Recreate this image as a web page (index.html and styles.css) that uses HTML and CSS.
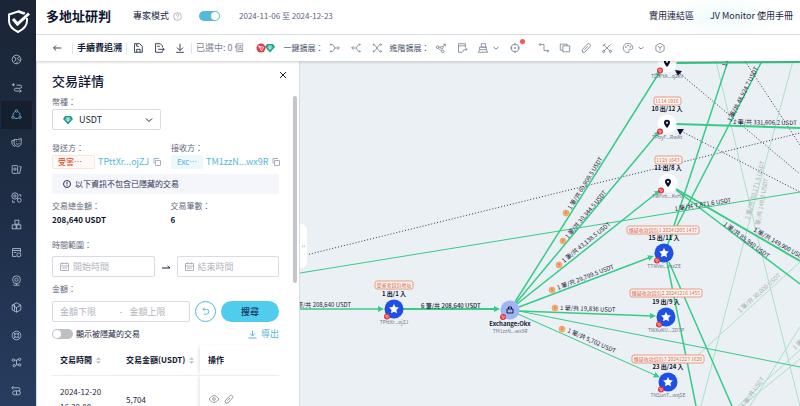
FILE: index.html
```html
<!DOCTYPE html>
<html lang="zh-Hant">
<head>
<meta charset="utf-8">
<title>多地址研判</title>
<link rel="stylesheet" href="styles.css">
</head>
<body>
<div class="app">
  <aside class="sidebar">
    <a class="logo" href="#"><svg width="24" height="24" viewBox="0 0 24 24"><path d="M12 2 19 4.500M21 9v3c0 5-4 8.500-9 11-5-2.500-9-6-9-11V5.500L12 2.500 18 4.800" /><path d="m7 10 4.500 5L23 4.500" class="logo-tick"/></svg></a>
    <nav class="nav">
      <a href="#"><svg class="ico" viewBox="0 0 14 14"><circle cx="7" cy="7" r="5.500"/><path d="M3 3.500 6 5v3l-2 1.500M11 3 8 5.500 10 8l2-.5M7 12l1-2.500"/></svg></a>
      <a href="#"><svg class="ico" viewBox="0 0 14 14"><path d="M1 3.500h4M3 1.500v4M7 4h4.500a1.500 1.500 0 0 1 0 4H6a1.500 1.500 0 0 0 0 3.500h7M11 9.500l2 2-2 2"/></svg></a>
      <a href="#" class="active"><svg class="ico" viewBox="0 0 14 14"><circle cx="7" cy="2.500" r="1.500"/><circle cx="2.500" cy="10.500" r="1.500"/><circle cx="11.500" cy="10.500" r="1.500"/><path d="M5 3.500A5 5 0 0 0 2.500 8M9 3.500A5 5 0 0 1 11.500 8M4.500 12h5"/></svg></a>
      <a href="#"><svg class="ico" viewBox="0 0 14 14"><path d="M4 3c3 1 5 0 9-1v5c0 3-2 5-4.500 5S4 10 4 7.500zM4 4 1 5c0 4 1 6 4 7M6.500 5.500h1M10 5h1M6.500 8.500c1.500 1 3 1 4-.5"/></svg></a>
      <a href="#"><svg class="ico" viewBox="0 0 14 14"><rect x="1.500" y="2" width="7" height="10" rx="1"/><circle cx="5" cy="6.500" r="1.500"/><path d="m10.500 3 2.500.6-2 8.400H9"/></svg></a>
      <a href="#"><svg class="ico" viewBox="0 0 14 14"><circle cx="5" cy="5" r="4"/><circle cx="5" cy="5" r="1.500"/><circle cx="10.500" cy="10.500" r="2.500"/><path d="M10 3.500h2.500V6M2 10.500V13h3"/></svg></a>
      <a href="#"><svg class="ico" viewBox="0 0 14 14"><rect x="5" y="1.500" width="5" height="5"/><rect x="1.500" y="7.500" width="5" height="5"/><rect x="7.500" y="7.500" width="5" height="5"/></svg></a>
      <a href="#"><svg class="ico" viewBox="0 0 14 14"><path d="M7 12H2V2h10v5M2 4.500h10M4 7h3"/><circle cx="10" cy="10" r="2.500"/></svg></a>
      <a href="#"><svg class="ico" viewBox="0 0 14 14"><circle cx="7" cy="6" r="5"/><circle cx="7" cy="6" r="2"/><path d="M7 11v2M3 13h8"/></svg></a>
      <a href="#"><svg class="ico" viewBox="0 0 14 14"><path d="m7 1 5.500 3v6L7 13 1.500 10V4zM1.500 4 7 7l5.500-3M7 7v6M4.500 3v8"/></svg></a>
      <a href="#"><svg class="ico" viewBox="0 0 14 14"><circle cx="7" cy="7" r="5.500"/><circle cx="7" cy="7" r="2.500"/><path d="m3 3 2.500 2.500M11 3 8.500 5.500M3 11l2.500-2.500M11 11 8.500 8.500"/></svg></a>
      <a href="#"><svg class="ico" viewBox="0 0 14 14"><circle cx="3" cy="4" r="1.500"/><circle cx="11" cy="3" r="1.500"/><circle cx="4" cy="11" r="1.500"/><circle cx="11" cy="10" r="1.500"/><path d="M4.500 4H7v6h2.500M7 4l3-1M5.500 11 7 10"/></svg></a>
      <a href="#"><svg class="ico" viewBox="0 0 14 14"><path d="M1.500 3.500h8a2 2 0 0 1 0 4M3 1.500l-2 2 2 2"/><rect x="2" y="7.500" width="10" height="5" rx="2.500"/><path d="M7 7.500v5"/></svg></a>
    </nav>
  </aside>

  <div class="main">
    <header class="header">
      <h1>多地址研判</h1>
      <label for="expert">專家模式</label>
      <svg class="help" viewBox="0 0 10 10"><circle cx="5" cy="5" r="4.300"/><path d="M3.700 4q0-1.400 1.300-1.400T6.300 4Q6.300 4.800 5 5.300V6M5 7v.7"/></svg>
      <input id="expert" class="switch switch-on" type="checkbox" checked>
      <span class="date">2024-11-06 至 2024-12-23</span>
      <a class="link push" href="#">實用連結區</a>
      <a class="link" href="#">JV Monitor 使用手冊</a>
    </header>

    <div class="toolbar">
      <button class="tool dark"><svg class="ico" viewBox="0 0 14 14"><path d="M12 7H3M6 4 3 7l3 3"/></svg></button>
      <span class="sep"></span>
      <strong>手續費追溯</strong>
      <span class="sep"></span>
      <div class="group dark">
        <button class="tool"><svg class="ico" viewBox="0 0 14 14"><path d="M3 2h6l3 3v7H3zM5.500 12V8.500h4V12M5.500 2v3H8"/></svg></button>
        <button class="tool"><svg class="ico" viewBox="0 0 14 14"><path d="M11 6V4.500L8.500 2H3v10h8v-1M5 5h3M6 8.500h7M11 6.500l2 2-2 2"/></svg></button>
        <button class="tool"><svg class="ico" viewBox="0 0 14 14"><path d="M7 2v7.500M3.500 6.500 7 10l3.500-3.500M2.500 12h9"/></svg></button>
      </div>
      <span class="sep"></span>
      <span class="picked">已選中: 0 個</span>
      <svg class="coins" viewBox="0 0 20 10"><circle cx="5" cy="5" r="4.500" fill="#e23a45"/><path d="m2.500 3 5 1.200-2 3.800zM2.500 3l3 2" fill="none" stroke="#fff" stroke-width=".8"/><use href="#gem" x="9" width="10" height="10"/></svg>
      <span class="caption">一鍵擴展：</span>
      <div class="group">
        <button class="tool"><svg class="ico" viewBox="0 0 14 14"><path d="M2 3h2l3 4h5M2 11h2l3-4M10 5l2 2-2 2"/><circle cx="2" cy="3" r=".6"/><circle cx="2" cy="11" r=".6"/></svg></button>
        <button class="tool"><svg class="ico" viewBox="0 0 14 14"><path d="M12 3h-2L7 7H2M12 11h-2L7 7M4 5 2 7l2 2M11 2l1 1-1 1M11 10l1 1-1 1"/></svg></button>
        <button class="tool"><svg class="ico" viewBox="0 0 14 14"><path d="M2 3h2l6 8h2M2 11h2l6-8h2M11 2l1.500 1L11 4M11 10l1.500 1-1.500 1M3 2v2M3 10v2"/></svg></button>
      </div>
      <span class="caption">進階擴展：</span>
      <div class="group">
        <button class="tool"><svg class="ico" viewBox="0 0 14 14"><circle cx="3" cy="6" r="1.500"/><circle cx="8" cy="6.500" r="1.500"/><circle cx="9" cy="11" r="1.500"/><path d="M4.500 6h2M9 5.500 12 3M9.500 2.500H12V5M4 7.500 7.500 10.500"/></svg></button>
        <button class="tool"><svg class="ico" viewBox="0 0 14 14"><path d="M3 2h8v4M3 2v10h4M3 4.500h8M8 12c0-3 1-3.500 4.500-3.500M11 6.500l2 2-2 2"/></svg></button>
        <button class="tool wide"><svg class="ico" viewBox="0 0 14 14"><path d="M5 2h5v4H5zM3 6h8v3H3zM1.500 12h11L11 9M3 9l-1.500 3"/></svg><svg class="caret" viewBox="0 0 6 6"><path d="m.5 2 2.500 2 2.500-2"/></svg></button>
        <button class="tool flagged"><svg class="ico" viewBox="0 0 14 14"><circle cx="7" cy="7" r="4.500"/><path d="M7 1v3M7 10v3M1 7h3M10 7h3M7 6v2M6 7h2"/></svg></button>
        <button class="tool"><svg class="ico" viewBox="0 0 14 14"><path d="M3 3h4v7h4"/><circle cx="2.500" cy="3" r="1"/><circle cx="11.500" cy="10.500" r="1"/></svg></button>
        <button class="tool"><svg class="ico" viewBox="0 0 14 14"><path d="M4.500 4.500h8v7h-8zM4.500 9.500h-3v-7h8v2"/></svg></button>
        <button class="tool"><svg class="ico" viewBox="0 0 14 14"><path d="m2.500 9 6-6.500a2 2 0 0 1 3 3L5.500 12H3z"/><path d="m5 9 4-4"/></svg></button>
        <button class="tool"><svg class="ico" viewBox="0 0 14 14"><path d="m3 3 8 8M11 3l-8 8M2 5l3-3"/><circle cx="11" cy="11" r="1.300"/><circle cx="3" cy="11" r="1.300"/></svg></button>
        <button class="tool wide"><svg class="ico" viewBox="0 0 14 14"><path d="M7 12.500A5.500 5.500 0 1 1 12.500 7c0 2-2.500 1.500-3.500 1.500-2 0-.5 2-1 3.500z"/><circle cx="4.500" cy="6" r=".6"/><circle cx="7" cy="4" r=".6"/><circle cx="9.800" cy="5.500" r=".6"/></svg><svg class="caret" viewBox="0 0 6 6"><path d="m.5 2 2.500 2 2.500-2"/></svg></button>
        <button class="tool"><svg class="ico" viewBox="0 0 14 14"><path d="m7 1.500 4.800 2.700v5.600L7 12.500 2.200 9.800V4.200zM4.500 5 7 6.500 9.500 5M7 6.500V10"/></svg></button>
      </div>
    </div>

    <div class="work">
      <section class="panel">
        <div class="panel-head">
          <h2>交易詳情</h2>
          <button class="close"><svg viewBox="0 0 8 8"><path d="m1 1 6 6M7 1 1 7"/></svg></button>
        </div>
        <div class="cols">
          <div>
            <label class="label" for="coin">幣種：</label>
            <div class="field coin-field">
              <svg class="gem" viewBox="0 0 10 10"><use href="#gem" width="10" height="10"/></svg>
              <select id="coin"><option>USDT</option></select>
              <svg class="chev" viewBox="0 0 8 8"><path d="m1 2.500 3 3 3-3"/></svg>
            </div>
          </div>
        </div>
        <div class="cols parties">
          <div>
            <span class="label">發送方：</span>
            <div class="party"><span class="tag tag-red">受害…</span><a href="#">TPttXr...ojZJ</a><svg class="copy" viewBox="0 0 8 8"><path d="M2.500 2.500h5v5h-5zM1 5.500v-5h5"/></svg></div>
          </div>
          <div>
            <span class="label">接收方：</span>
            <div class="party"><span class="tag tag-blue">Exc…</span><a href="#">TM1zzN...wx9R</a><svg class="copy" viewBox="0 0 8 8"><path d="M2.500 2.500h5v5h-5zM1 5.500v-5h5"/></svg></div>
          </div>
        </div>
        <p class="notice"><svg viewBox="0 0 8 8"><circle cx="4" cy="4" r="3.500"/><path d="M4 2v2.500M4 5.300v.8"/></svg>以下資訊不包含已隱藏的交易</p>
        <div class="cols totals">
          <div><span class="label">交易總金額：</span><strong>208,640 USDT</strong></div>
          <div><span class="label">交易筆數：</span><strong>6</strong></div>
        </div>
        <label class="label" for="from">時間範圍：</label>
        <div class="range">
          <div class="field"><svg class="cal" viewBox="0 0 9 9"><path d="M.5 1.500h8v7h-8zM.5 4h8M2.500.3v2M6.500.3v2M2 6h5"/></svg><input id="from" type="text" placeholder="開始時間"></div>
          <svg class="arrow" viewBox="0 0 8 4"><path d="M0 3h8L5.500 1"/></svg>
          <div class="field"><svg class="cal" viewBox="0 0 9 9"><path d="M.5 1.500h8v7h-8zM.5 4h8M2.500.3v2M6.500.3v2M2 6h5"/></svg><input type="text" placeholder="結束時間" aria-label="結束時間"></div>
        </div>
        <label class="label" for="low">金額：</label>
        <div class="amount">
          <div class="field"><input id="low" type="text" placeholder="金額下限"><span>-</span><input type="text" placeholder="金額上限" aria-label="金額上限"></div>
          <button class="reset"><svg viewBox="0 0 10 10"><path d="M2 2.500h4a2.700 2.700 0 0 1 0 5.500H3M4 .8 2 2.500l2 1.700"/></svg></button>
          <button class="search">搜尋</button>
        </div>
        <div class="options">
          <input id="hidden" class="switch" type="checkbox"><label for="hidden">顯示被隱藏的交易</label>
          <a href="#"><svg viewBox="0 0 9 9"><path d="M4.500.5v5M2 3.500l2.500 2.500L7 3.500M.5 8h8"/></svg>導出</a>
        </div>
        <table>
          <thead><tr>
            <th>交易時間<svg class="sort" viewBox="0 0 6 8"><path d="m3 0 3 3H0zM3 8 0 5h6z"/></svg></th>
            <th>交易金額(USDT)<svg class="sort" viewBox="0 0 6 8"><path d="m3 0 3 3H0zM3 8 0 5h6z"/></svg></th>
            <th class="fixed">操作</th>
          </tr></thead>
          <tbody><tr>
            <td>2024-12-20<br>16:38:00</td>
            <td>5,704</td>
            <td class="fixed"><div class="acts"><svg viewBox="0 0 12 10"><path d="M1 5q5-7 10 0-5 7-10 0z"/><circle cx="6" cy="5" r="1.300"/></svg><svg viewBox="0 0 12 10"><path d="m2 7 5-5.500q1.500-1 2.500.5t0 2L5 9H2.500zM4.500 6.500 7 4"/></svg></div></td>
          </tr></tbody>
        </table>
        <i class="thumb"></i>
      </section>

      <section class="graph">
        <svg class="canvas">
          <defs>
            <symbol id="gem" viewBox="0 0 10 10"><path d="M2 1h6l2 3-5 5.500L0 4z" fill="#1a9c8c"/><path d="M2.800 3h4.400M5 3v4M2.500 4.700q2.500 1 5 0" fill="none" stroke="#fff" stroke-width=".8"/></symbol>
            <marker id="tip" markerUnits="userSpaceOnUse" markerWidth="7" markerHeight="6" refX="3" refY="3" orient="auto"><path d="M0 0 6 3 0 6z" fill="#35cc87"/></marker>
            <g id="badge"><circle r="3" fill="#e5333f"/><path d="m-1.500-1.200 3 .7-1.300 2.200z" fill="none" stroke="#fff" stroke-width=".5"/></g>
            <g id="fee"><circle r="3" fill="#f7b27a" stroke="#ee9450" stroke-width=".6"/><path d="M-1.200-1.200h2.400M-1.200 0h2.400M0-1.200v2.800" stroke="#d66f2e" stroke-width=".5"/></g>
            <g id="star"><circle r="9.500" fill="#1e4fe6"/><path d="m0-5 1.500 3.100 3.400.4L2.400.9l.6 3.400L0 2.700l-3 1.600.6-3.400-2.500-2.400 3.400-.4z" fill="#fff"/><use href="#badge" x="-7" y="7.500"/></g>
            <g id="pin"><circle r="9.500" fill="#fff"/><path d="M0 4C-1.500 2-3 .5-3-1.300a3 3 0 0 1 6 0C3 .5 1.500 2 0 4z" fill="#0c1230"/><circle cy="-1.300" r="1" fill="#fff"/><use href="#badge" x="-7" y="7.500"/></g>
          </defs>
          <g transform="translate(-300 -61)">
            <g class="faint">
              <path d="M716 61 757 235 800 406M793 61 743 245 701 406M700 353 800 262M690 362 700 353M738 406 800 350M750 406 800 327M742 406 800 359"/>
            </g>
            <g class="dots">
              <path d="M306 255 800 133M678 72 800 174M681 131 800 192M745 61 800 145"/>
            </g>
            <g class="edge thin">
              <path d="M300 273 800 192M519 311 800 367"/>
            </g>
            <g class="edge">
              <path d="M728 61 665 253M762 61 663 253M667 262 696 406M669 262 732 406"/>
              <path d="M676 190 800 284"/>
              <path marker-end="url(#tip)" d="M515 302 659 73"/>
              <path marker-end="url(#tip)" d="M516 303 658 133"/>
              <path marker-end="url(#tip)" d="M517 304 658 192"/>
              <path marker-end="url(#tip)" d="M519 307 651 257"/>
              <path marker-end="url(#tip)" d="M519 311 653 316"/>
              <path class="thin" marker-end="url(#tip)" d="M518 314 657 376"/>
              <path marker-end="url(#tip)" d="M300 309H381"/>
            </g>
            <g class="edge wide">
              <path d="M676 63 800 62M676 124 800 128M676 189 800 261"/>
              <path marker-end="url(#tip)" d="M403 309H497"/>
            </g>
            <path d="m675 70 7 1-4 5zM677 129h7l-4 6z" fill="#0c1230"/>

            <g class="flow pale">
              <text transform="translate(749 220) rotate(-75)">2 筆/共 30,171.5 USDT</text>
              <text transform="translate(759 230) rotate(-80)">1 筆/共 149,9 USDT</text>
              <text transform="translate(740 313) rotate(-42)">1 筆/共 30,000 USDT</text>
              <text transform="translate(795 350) rotate(-42)">1 筆/共 9,000 USDT</text>
              <text transform="translate(744 408) rotate(-55)">1 筆/共 USDT</text>
            </g>
            <g class="flow">
              <text x="297" y="307">筆/共 208,640 USDT</text>
              <text x="421" y="308" class="strong">6 筆/共 208,640 USDT</text>
              <text transform="translate(571 210) rotate(-58)">1 筆/共 60,909.5 USDT</text>
              <text transform="translate(568 239) rotate(-50)">1 筆/共 30,344.5 USDT</text>
              <text transform="translate(564 263) rotate(-39)">1 筆/共 43,138.5 USDT</text>
              <text transform="translate(558 290) rotate(-21)">1 筆/共 29,799.5 USDT</text>
              <text transform="translate(560 310) rotate(2)">1 筆/共 19,836 USDT</text>
              <text transform="translate(567 332) rotate(24)">1 筆/共 5,702 USDT</text>
              <text transform="translate(733 124) rotate(1)">1 筆/共 331,606.2 USDT</text>
              <text transform="translate(731 122) rotate(-63)">1 筆/共 48,924.7 USDT</text>
              <text transform="translate(675 211) rotate(-9)">1 筆/共 7,871.6 USDT</text>
              <text transform="translate(723 225) rotate(37)">1 筆/共 85,940 USDT</text>
              <text transform="translate(753 231) rotate(30)">1 筆/共 149,900 USDT</text>
              <text transform="translate(726 67) rotate(-72)">1 筆/共 20,000 USDT</text>
            </g>
            <use href="#fee" x="566" y="213"/><use href="#fee" x="563" y="241"/><use href="#fee" x="559" y="265"/>
            <use href="#fee" x="552" y="290"/><use href="#fee" x="555" y="308"/><use href="#fee" x="562" y="329"/>

            <g class="tags">
              <rect x="375" y="281" width="38" height="8" rx="2"/><text x="394" y="287">受害者錢包地址</text>
              <rect x="654" y="97" width="27" height="8" rx="2"/><text x="667" y="103">1114 1016</text>
              <rect x="655" y="156" width="27" height="8" rx="2"/><text x="668" y="162">1129 1643</text>
              <rect x="627" y="226" width="72" height="8" rx="2"/><text x="663" y="232">嫌疑收款錢包1 20241205 1437</text>
              <rect x="630" y="289" width="72" height="8" rx="2"/><text x="666" y="295">嫌疑收款錢包2 20241216 1455</text>
              <rect x="632" y="355" width="72" height="8" rx="2"/><text x="668" y="361">嫌疑收款錢包3 20241223 1620</text>
            </g>
            <use href="#star" x="394" y="309"/>
            <use href="#star" x="664" y="253"/>
            <use href="#star" x="666" y="317"/>
            <use href="#star" x="668" y="382"/>
            <use href="#pin" x="667" y="63"/>
            <use href="#pin" x="667" y="124"/>
            <use href="#pin" x="668" y="183"/>
            <circle cx="510" cy="310" r="9.500" fill="#9fb3f6"/><path d="M507 309h6v4h-6zM508.500 309v-2h3v2" fill="none" stroke="#0c1230" stroke-width=".9"/>
            <use href="#badge" x="503" y="317"/>

            <g class="names">
              <text x="394" y="296">1 出/1 入</text><text x="667" y="111">10 出/12 入</text>
              <text x="668" y="170">11 出/8 入</text><text x="664" y="240">15 出/11 入</text>
              <text x="666" y="304">19 出/9 入</text><text x="668" y="369">23 出/24 入</text>
              <text x="510" y="326">Exchange:Okx</text>
            </g>
            <g class="hashes">
              <text x="394" y="324">TPttXr...ojZJ</text><text x="510" y="333">TM1zzN...wx9R</text>
              <text x="667" y="78">TSBFtA...q2k9</text><text x="667" y="139">TPoyF...RwAt</text>
              <text x="668" y="198">TwFvti...KvHX</text><text x="664" y="268">TTNVei...mzZE</text>
              <text x="666" y="332">TWXuKU...2D7P</text><text x="668" y="397">TNSunT...wqSE</text>
            </g>
          </g>
        </svg>
        <button class="handle">‹›</button>
      </section>
    </div>
  </div>
</div>
</body>
</html>
```
FILE: styles.css
```css
* { box-sizing: border-box; }
body, h1, h2, p { margin: 0; }
body {
  font: 8px/12px "Noto Sans CJK TC", "Noto Sans", sans-serif;
  color: #1b2540;
}
button, input, select { font: inherit; color: inherit; }
button { padding: 0; border: 0; background: none; }
a { color: inherit; text-decoration: none; }
svg { display: block; flex: none; fill: none; stroke: currentColor; stroke-width: 1; }

.app { display: flex; height: 100vh; overflow: hidden; }

.sidebar {
  display: flex;
  flex-direction: column;
  flex: none;
  width: 36px;
  background: linear-gradient(#1a2536, #1e2d45 50%, #273d60);
  color: #c3cddb;
}
.logo { display: flex; justify-content: center; height: 46px; padding-top: 9px; color: #fff; }
.logo svg { stroke-width: 2; }
.logo-tick { stroke-width: 3; }
.nav { display: flex; flex-direction: column; flex: 1; padding: 0 4px 2px 1px; }
.nav a { display: flex; flex: 1; align-items: center; justify-content: center; }
.nav .ico { width: 11px; height: 11px; }
.nav .active { background: #151f2e; color: #6fcbe8; }

.main { display: flex; flex-direction: column; flex: 1; min-width: 0; }

.header {
  display: flex;
  align-items: center;
  flex: none;
  height: 35px;
  padding: 0 7px 2px 10px;
  border-bottom: 1px solid #e3e7ec;
  background: radial-gradient(ellipse 60px 24px at 90% 50%, #f0fafb, #fff);
  font-size: 9px;
}
.header h1 { margin-right: 22px; font-size: 13px; font-weight: 700; color: #0d1530; }
.help { width: 9px; height: 9px; margin: 0 17px 0 4px; color: #a9b0bd; stroke-width: 1; }
.date { margin-left: 19px; font-size: 8px; color: #59627a; }
.push { margin-left: auto; }
.link + .link { margin-left: 16px; }

.switch {
  appearance: none;
  flex: none;
  width: 21px;
  height: 10px;
  margin: 0;
  padding: 1px;
  border-radius: 5px;
  background: #bfbfc6;
}
.switch::before { content: ""; display: block; width: 8px; height: 8px; border-radius: 50%; background: #fff; }
.switch-on { background: #56b8da; }
.switch-on::before { margin-left: auto; }

.toolbar {
  position: relative;
  z-index: 1;
  display: flex;
  align-items: center;
  flex: none;
  height: 26px;
  padding-left: 14px;
  background: #fff;
  box-shadow: 0 1px 3px #0003;
  color: #7b8496;
}
.toolbar > * { flex: none; }
.toolbar strong { font-size: 9px; color: #10193a; }
.dark { color: #1b2540; }
.sep { width: 1px; height: 11px; margin: 0 4px; background: #e0e3e9; }
.tool + .sep { margin-left: 8px; }
.group { display: flex; gap: 7px; }
.caption + .group { margin: 0 6px 0 4px; }
.tool { display: flex; align-items: center; position: relative; }
.tool .ico { width: 14px; height: 14px; padding: 1px; }
.caret { width: 6px; height: 6px; margin-left: 3px; }
.wide { margin-right: 2px; }
.flagged { margin-right: 8px; }
.flagged::after {
  content: "";
  position: absolute;
  top: -2px;
  right: -3px;
  width: 5px;
  height: 5px;
  border-radius: 50%;
  background: #f0555c;
}
.picked { margin-right: 12px; font-size: 9px; }
.coins { width: 20px; height: 10px; margin-right: 8px; stroke: none; }
.caption { white-space: nowrap; color: #4b556c; }

.work { display: flex; flex: 1; min-height: 0; }

.panel {
  position: relative;
  z-index: 0;
  flex: none;
  width: 264px;
  padding: 10px 20px 0 15px;
  overflow: hidden;
  border-left: 1px solid #d5dce6;
  border-right: 1px solid #d5dce6;
}
.panel-head { display: flex; justify-content: space-between; margin-right: -8px; margin-bottom: 5px; }
.panel h2 { font-size: 13px; line-height: 20px; font-weight: 500; color: #0d1530; }
.close { display: flex; height: 9px; }
.close svg { width: 8px; height: 8px; }
.thumb { position: absolute; top: 35px; right: 2px; width: 4px; height: 187px; border-radius: 2px; background: #c4c5ca; }

.label { display: block; color: #5f687c; }
.cols { display: grid; grid-template-columns: 1fr 1fr; gap: 10px; }
.field {
  display: flex;
  align-items: center;
  height: 21px;
  padding: 0 7px;
  border: 1px solid #d9dbe0;
  border-radius: 2px;
}
.field input, .field select {
  flex: 1;
  width: 0;
  min-width: 0;
  padding: 0;
  border: 0;
  outline: 0;
  background: none;
  font-size: 9px;
}
.field input::placeholder { color: #b3b5bd; opacity: 1; }
.coin-field { margin-top: 1px; padding: 0 7px 0 10px; }
.coin-field select { appearance: none; margin-left: 6px; }
.gem { width: 10px; height: 10px; stroke: none; }
.chev { width: 8px; height: 8px; }

.parties { margin-top: 12px; }
.party { display: flex; align-items: center; height: 14px; margin-top: 1px; white-space: nowrap; color: #54b7d6; }
.party a { margin: 0 4px 0 3px; font-size: 9px; }
.tag { flex: none; height: 14px; padding: 0 5px; border: 1px solid transparent; border-radius: 2px; }
.tag-red { width: 43px; border-color: #fbe3dc; background: #fffaf8; color: #e0502e; font-weight: 500; }
.tag-blue { width: 32px; background: #edf8fc; }
.copy { width: 8px; height: 8px; color: #a9b0bd; }

.notice {
  display: flex;
  align-items: center;
  gap: 4px;
  height: 20px;
  margin: 5px 0 6px;
  padding-left: 11px;
  background: #f4f6fb;
  color: #2a3450;
}
.notice svg { width: 8px; height: 8px; }
.totals { margin-bottom: 12px; }
.totals strong { display: block; line-height: 15px; font-weight: 600; color: #0d1530; }

.range { display: grid; grid-template-columns: 1fr 8px 1fr; align-items: center; gap: 7px; margin: 5px 0 6px; }
.cal { width: 9px; height: 9px; margin-right: 4px; color: #b3b5bd; }
.arrow { width: 8px; height: 4px; }
.amount { display: flex; align-items: center; gap: 5px; margin: 6px 0; }
.amount .field { flex: 1; }
.amount span { margin: 0 7px; color: #9a9da6; }
.reset { display: grid; place-items: center; width: 21px; height: 21px; border: 1px solid #54b7d6; border-radius: 50%; color: #54b7d6; }
.reset svg { width: 9px; height: 9px; }
.search { width: 58px; height: 21px; border-radius: 11px; background: #50cdec; font-size: 9px; font-weight: 500; color: #12305c; }
.options { display: flex; align-items: center; gap: 3px; margin-bottom: 5px; }
.options a { display: flex; align-items: center; gap: 4px; margin-left: auto; font-size: 9px; color: #54b7d6; }
.options svg { width: 9px; height: 9px; }

table { width: 100%; table-layout: fixed; border-collapse: collapse; }
th { height: 30px; padding: 0 0 0 8px; border-bottom: 1px solid #eceef2; text-align: left; font-weight: 600; white-space: nowrap; color: #0d1530; }
th:first-child { width: 66px; }
th:nth-child(2) { width: 82px; }
td { height: 48px; padding: 0 0 0 8px; line-height: 15px; }
.fixed { box-shadow: -3px 0 4px -2px #0000001f; }
.sort { display: inline-block; width: 5px; height: 7px; margin-left: 4px; vertical-align: -1px; fill: #bcbfc7; stroke: none; }
.acts { display: flex; gap: 3px; color: #9a9da6; }
.acts svg { width: 12px; height: 10px; }

.graph { position: relative; flex: 1; min-width: 0; overflow: hidden; background: #ebf0f4; }
.canvas { width: 100%; height: 100%; stroke: none; }
.canvas text { font-size: 6px; fill: #1a2236; }
.edge { stroke: #35cc87; stroke-width: 1.5; }
.edge.thin, .edge .thin { stroke-width: 1; }
.edge.wide { stroke-width: 2; }
.faint { stroke: #addfcb; stroke-width: 1; }
.dots { stroke: #2b3350; stroke-width: 1; stroke-dasharray: 1 2; }
.canvas .pale text { fill: #a9b2b5; }
.canvas .strong { font-weight: 500; }
.tags rect { fill: #fdf6f3; stroke: #e79a82; stroke-width: 1; }
.tags text, .names text, .hashes text { text-anchor: middle; }
.canvas .tags text { font-size: 5px; fill: #d5694a; }
.canvas .names text { font-weight: 700; fill: #0d1530; }
.canvas .hashes text { font-size: 5px; fill: #70788a; }
.handle {
  position: absolute;
  top: 163px;
  left: 0;
  width: 7px;
  height: 44px;
  border-radius: 0 6px 6px 0;
  background: #fff;
  font-size: 6px;
  color: #8c93a1;
}
```
